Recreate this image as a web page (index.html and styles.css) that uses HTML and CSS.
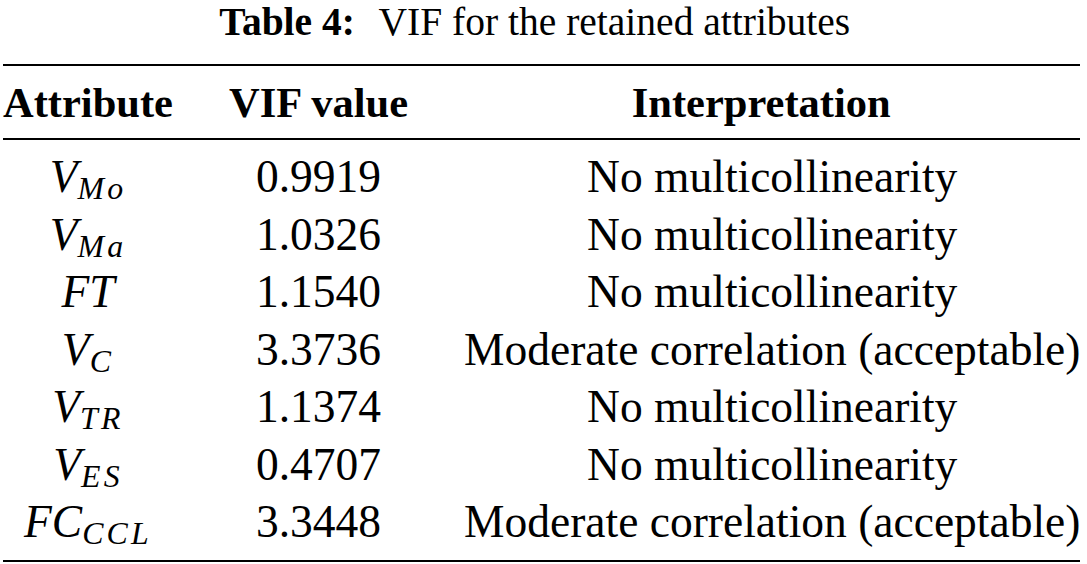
FILE: index.html
```html
<!DOCTYPE html>
<html lang="en">
<head>
<meta charset="utf-8">
<title>Table 4: VIF for the retained attributes</title>
<link rel="stylesheet" href="styles.css">
</head>
<body>
<table class="vif">
  <caption class="cap"><b class="cap-label">Table 4:</b>VIF for the retained attributes</caption>
  <thead>
    <tr class="head">
      <th class="c1">Attribute</th>
      <th class="c2">VIF value</th>
      <th class="c3">Interpretation</th>
    </tr>
  </thead>
  <tbody>
    <tr class="row first">
      <td class="c1"><i class="m">V</i><i class="sub">Mo</i></td>
      <td class="c2">0.9919</td>
      <td class="c3">No multicollinearity</td>
    </tr>
    <tr class="row">
      <td class="c1"><i class="m">V</i><i class="sub">Ma</i></td>
      <td class="c2">1.0326</td>
      <td class="c3">No multicollinearity</td>
    </tr>
    <tr class="row">
      <td class="c1"><i class="m">FT</i></td>
      <td class="c2">1.1540</td>
      <td class="c3">No multicollinearity</td>
    </tr>
    <tr class="row">
      <td class="c1"><i class="m">V</i><i class="sub">C</i></td>
      <td class="c2">3.3736</td>
      <td class="c3">Moderate correlation (acceptable)</td>
    </tr>
    <tr class="row">
      <td class="c1"><i class="m">V</i><i class="sub">TR</i></td>
      <td class="c2">1.1374</td>
      <td class="c3">No multicollinearity</td>
    </tr>
    <tr class="row">
      <td class="c1"><i class="m">V</i><i class="sub">ES</i></td>
      <td class="c2">0.4707</td>
      <td class="c3">No multicollinearity</td>
    </tr>
    <tr class="row last">
      <td class="c1"><i class="m">FC</i><i class="sub">CCL</i></td>
      <td class="c2">3.3448</td>
      <td class="c3">Moderate correlation (acceptable)</td>
    </tr>
  </tbody>
</table>
</body>
</html>
```

FILE: styles.css
```css
html, body {
  margin: 0;
  padding: 0;
  background: #fff;
}

body {
  color: #000;
  font-family: "Liberation Serif", "Times New Roman", serif;
}

.vif {
  margin-left: 3px;
  border-collapse: collapse;
  border-top: 2px solid #000;
  border-bottom: 2px solid #000;
}

.cap {
  font-size: 39.5px;
  line-height: 44px;
  padding: 0 14px 20px 0;
  white-space: nowrap;
}

.cap-label {
  font-weight: bold;
  margin-right: 0.6em;
}

.vif th,
.vif td {
  text-align: center;
  white-space: nowrap;
  padding: 0;
}

.head th {
  font-size: 42.5px;
  font-weight: bold;
  line-height: 50px;
  padding-top: 12px;
  padding-bottom: 10px;
  border-bottom: 2px solid #000;
}

.row td {
  font-size: 45.5px;
  line-height: 57.5px;
}

.row.first td {
  padding-top: 8px;
}

.row.last td {
  padding-bottom: 9px;
}

.vif .c1 {
  padding-right: 28px;
}

.vif .c2 {
  padding-left: 28px;
  padding-right: 28px;
}

.vif .c3 {
  padding-left: 28px;
}

.head .c3 {
  padding-right: 22px;
}

.m {
  font-style: italic;
}

.sub {
  font-style: italic;
  font-size: 0.7em;
  line-height: 0;
  vertical-align: -7px;
  letter-spacing: 0.1em;
}
```
